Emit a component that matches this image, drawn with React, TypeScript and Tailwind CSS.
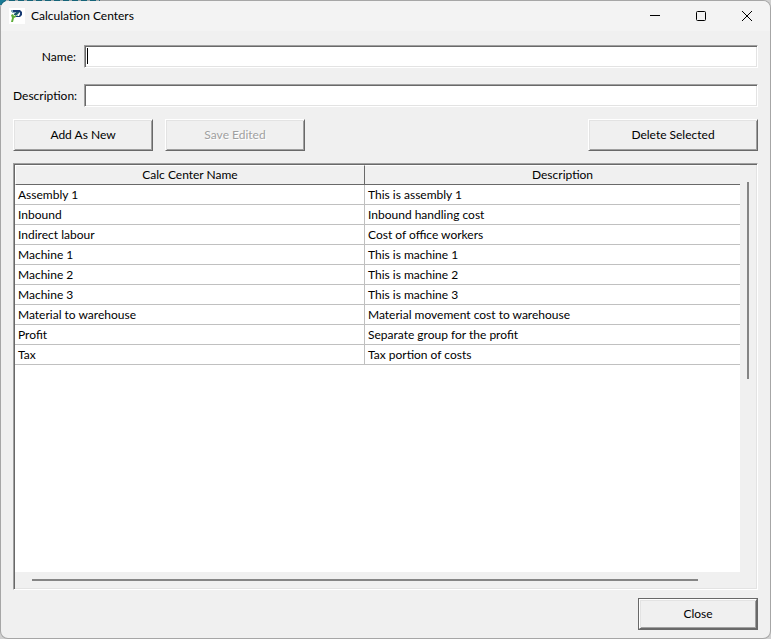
import { useState } from "react";
import type { ButtonHTMLAttributes } from "react";

const centers = [
  { name: "Assembly 1", description: "This is assembly 1" },
  { name: "Inbound", description: "Inbound handling cost" },
  { name: "Indirect labour", description: "Cost of office workers" },
  { name: "Machine 1", description: "This is machine 1" },
  { name: "Machine 2", description: "This is machine 2" },
  { name: "Machine 3", description: "This is machine 3" },
  { name: "Material to warehouse", description: "Material movement cost to warehouse" },
  { name: "Profit", description: "Separate group for the profit" },
  { name: "Tax", description: "Tax portion of costs" },
];

// Classic sunken / raised 3D edges
const sunken =
  "border border-t-[#a0a0a0] border-l-[#a0a0a0] border-r-white border-b-white shadow-[inset_1px_1px_0_#696969,inset_-1px_-1px_0_#e3e3e3]";
const raised =
  "border border-t-white border-l-white border-r-[#696969] border-b-[#696969] shadow-[inset_1px_1px_0_#e3e3e3,inset_-1px_-1px_0_#a0a0a0]";

const Button = ({ className = "", ...props }: ButtonHTMLAttributes<HTMLButtonElement>) => (
  <button
    type="button"
    className={`h-8 bg-[#f0f0f0] disabled:text-[#a0a0a0] disabled:[text-shadow:1px_1px_0_#fff] ${raised} ${className}`}
    {...props}
  />
);

const Logo = () => (
  <svg viewBox="0 0 16 16" className="size-4 bg-white" aria-hidden="true">
    <path d="M3 2h8l2 2v3l-2 2H7V8h3l1-2V5l-1-1H3z" fill="#163a73" />
    <path d="M2 2h2v2H2zM3 4h3v1H3z" fill="#86aebd" />
    <path d="M7 4h3v1L8 7H5V6z" fill="#1c5a6e" />
    <path d="M6 7h3v1H6z" fill="#9fc4c0" />
    <path d="M2 7l2-1 1 2 2-1v2l-2 1-1 4H2l1-4z" fill="#5fae3a" />
  </svg>
);

const TitleBar = () => (
  <header className="flex h-[30px] shrink-0 items-center bg-[#f3f3f3] pl-2">
    <Logo />
    <h1 className="ml-1.5 flex-1">Calculation Centers</h1>
    <button type="button" aria-label="Minimize" className="flex h-full w-[46px] items-center justify-center">
      <svg viewBox="0 0 12 12" className="size-3" stroke="#000" fill="none">
        <path d="M1 5.5h10" />
      </svg>
    </button>
    <button type="button" aria-label="Maximize" className="flex h-full w-[46px] items-center justify-center">
      <svg viewBox="0 0 12 12" className="size-3" stroke="#000" fill="none">
        <rect x="1.5" y="1.5" width="9" height="9" rx="1" />
      </svg>
    </button>
    <button type="button" aria-label="Close window" className="flex h-full w-[46px] items-center justify-center">
      <svg viewBox="0 0 12 12" className="size-3" stroke="#000" fill="none">
        <path d="M1 1l10 10M11 1L1 11" />
      </svg>
    </button>
  </header>
);

const CentersTable = () => (
  <div className={`flex min-h-0 flex-1 flex-col p-px ${sunken}`}>
    <div className="flex min-h-0 flex-1">
      <div className="flex-1 bg-white">
        <table className="w-full table-fixed border-separate border-spacing-0">
          <colgroup>
            <col className="w-[350px]" />
            <col />
          </colgroup>
          <thead>
            <tr className="h-5 bg-[#f0f0f0]">
              <th className="border-t border-r border-b border-l border-t-white border-r-[#696969] border-b-[#696969] border-l-white p-0 leading-[18px] font-normal">
                Calc Center Name
              </th>
              <th className="border-t border-b border-t-white border-b-[#696969] p-0 pl-5 leading-[18px] font-normal">
                Description
              </th>
            </tr>
          </thead>
          <tbody>
            {centers.map((center) => (
              <tr key={center.name} className="h-5">
                <td className="border-r border-b border-[#c0c0c0] px-[3px] py-0 leading-[19px]">{center.name}</td>
                <td className="border-b border-[#c0c0c0] px-[3px] py-0 leading-[19px]">{center.description}</td>
              </tr>
            ))}
          </tbody>
        </table>
      </div>
      {/* vertical scrollbar */}
      <div className="w-4 pt-[17px] pl-[7px]">
        <div className="h-[197px] w-0.5 bg-[#858585]" />
      </div>
    </div>
    {/* horizontal scrollbar */}
    <div className="h-4 pt-[7px] pr-[58px] pl-[17px]">
      <div className="h-0.5 bg-[#858585]" />
    </div>
  </div>
);

export default function App() {
  const [name, setName] = useState("");
  const [description, setDescription] = useState("");

  return (
    <div className="h-screen bg-[#d0d0d0] bg-[repeating-linear-gradient(90deg,#1b7d98_0,#1b7d98_6px,#c8d4d8_6px,#c8d4d8_9px)] bg-[length:100px_5px] bg-no-repeat font-[Lato,'Open_Sans',sans-serif] text-[12px] leading-4 text-black">
      <div className="flex h-full flex-col overflow-hidden rounded-lg border border-black/20 bg-[#f0f0f0] bg-clip-padding">
        <TitleBar />
        <main className="flex min-h-0 flex-1 flex-col px-3 pt-3.5 pb-2">
          <div className="grid grid-cols-[63px_1fr] items-center gap-x-2 gap-y-4">
            <label htmlFor="name" className="text-right whitespace-nowrap">
              Name:
            </label>
            <div className="relative flex">
              <input
                id="name"
                value={name}
                onChange={(e) => setName(e.target.value)}
                className={`h-[23px] w-full bg-white px-1 outline-none ${sunken}`}
              />
              {name === "" && <span className="absolute top-[3px] left-[3px] h-4 w-px bg-black" />}
            </div>
            <label htmlFor="description" className="text-right whitespace-nowrap">
              Description:
            </label>
            <input
              id="description"
              value={description}
              onChange={(e) => setDescription(e.target.value)}
              className={`h-[23px] w-full bg-white px-1 outline-none ${sunken}`}
            />
          </div>

          <div className="mt-3 mb-3 flex gap-3">
            <Button className="w-[140px]">Add As New</Button>
            <Button className="w-[140px]" disabled>
              Save Edited
            </Button>
            <Button className="ml-auto w-[170px]">Delete Selected</Button>
          </div>

          <CentersTable />

          <div className="mt-2 ml-auto flex border border-[#696969]">
            <Button className="h-[30px] w-[118px]">Close</Button>
          </div>
        </main>
      </div>
    </div>
  );
}
